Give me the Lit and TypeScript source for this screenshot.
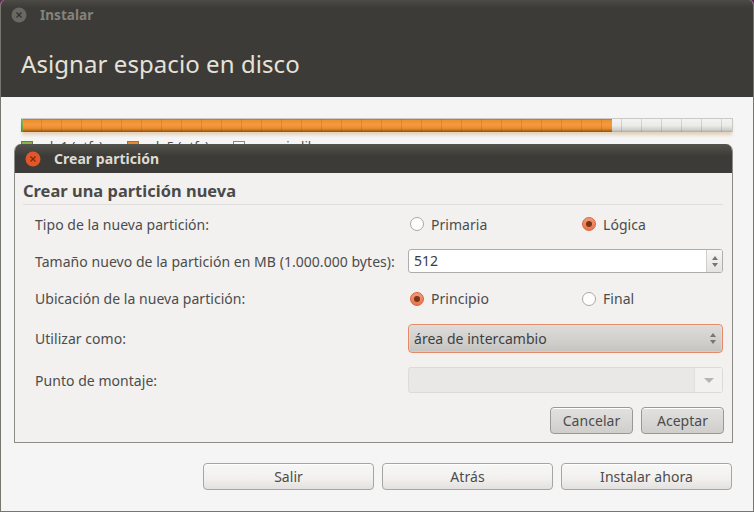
import { LitElement, css, html } from 'lit';
import { customElement } from 'lit/decorators.js';

const legend = [
  { name: 'sda1 (ntfs)', cls: 'green' },
  { name: 'sda5 (ntfs)', cls: 'orange' },
  { name: 'espacio libre', cls: 'free' },
];

@customElement('app-root')
export class AppRoot extends LitElement {
  static styles = css`
    :host {
      display: block;
      width: 754px;
      height: 512px;
      background: #5e2750;
      font-family: 'Noto Sans', sans-serif;
      font-size: 14px;
      letter-spacing: 0.04px;
      color: #4c4c4c;
    }

    * {
      box-sizing: border-box;
    }

    .window {
      position: relative;
      display: flex;
      flex-direction: column;
      height: 512px;
      border-radius: 5px 5px 0 0;
      border: 1px solid #77756f;
      border-top: none;
      background: #f5f5f5;
      overflow: hidden;
    }

    .header {
      height: 97px;
      flex: none;
      background: linear-gradient(#4c4a45 0, #3c3b37 8px);
      color: #e6e2da;
    }

    .titlebar {
      display: flex;
      align-items: center;
      gap: 13px;
      height: 30px;
      padding-left: 10px;
      font-size: 13.5px;
      font-weight: 700;
      color: #85837d;
    }

    .heading {
      margin: 16px 0 0 20px;
      font-size: 24px;
      line-height: 36px;
      font-weight: 400;
      letter-spacing: 0.07px;
    }

    .content {
      flex: 1;
      padding: 21px 20px 0;
    }

    .bar {
      display: flex;
      height: 14px;
      width: 712px;
      border: 1px solid #c9c9c6;
      border-width: 1px 1px 0 0;
      box-shadow: 0 4px 3px -1px rgba(190, 125, 50, 0.3);
      background: linear-gradient(#f3f3f2, #ebebea 50%, #cdcdcb 85%, #a9a9a7);
      position: relative;
    }

    .bar .seg-green {
      width: 2px;
      background: linear-gradient(#8cc152, #5f9a2c);
    }

    .bar .seg-orange {
      width: 589px;
      background: linear-gradient(#ee8e2e 0, #f59a3f 40%, #e58a2c 72%, #8f5310);
      border-top: 1px solid #d27c1f;
    }

    .ticks {
      position: absolute;
      inset: 0;
      background-image: linear-gradient(
        to right,
        transparent 19px,
        rgba(90, 60, 20, 0.17) 19px
      );
      background-size: 20px 100%;
      background-position: 1px 0;
    }

    .legend {
      display: flex;
      margin-top: 9px;
      font-size: 13px;
      line-height: 11px;
    }

    .legend span {
      display: flex;
      align-items: flex-start;
      gap: 6px;
      width: 106px;
    }

    .legend i {
      width: 12px;
      height: 12px;
      border: 1px solid #888;
    }

    .legend .green {
      background: #8ab34a;
      border-color: #5f8a2a;
    }

    .legend .orange {
      background: #e98a30;
      border-color: #b86a1f;
    }

    .legend .free {
      background: #f7f7f7;
    }

    .footer {
      display: flex;
      justify-content: flex-end;
      gap: 8px;
      padding: 0 21px 21px 0;
    }

    .footer button {
      width: 171px;
    }

    button {
      height: 27px;
      border: 1px solid #a6a5a1;
      border-radius: 4px;
      background: linear-gradient(#f7f7f6, #f2f1f0 55%, #e2e1df);
      color: #4c4c4c;
      font: inherit;
      letter-spacing: inherit;
      padding: 0;
      box-shadow: inset 0 1px 0 #fff;
    }

    .dialog {
      position: absolute;
      left: 13px;
      top: 144px;
      width: 719px;
      height: 299px;
      border: 1px solid #8d8c88;
      border-top: none;
      border-radius: 7px 7px 0 0;
      background: #f2f1f0;
      overflow: hidden;
    }

    .dialog-title {
      display: flex;
      align-items: center;
      gap: 13px;
      height: 29px;
      padding-left: 10px;
      background: linear-gradient(#55534e 0, #3c3b37 12px);
      color: #dfdbd2;
      font-size: 14px;
      font-weight: 700;
    }

    .dialog-body {
      padding: 0 9px 0 8px;
    }

    h2 {
      margin: 0;
      height: 32px;
      padding-top: 7px;
      border-bottom: 1px solid #dfdedc;
      font-size: 16.4px;
      line-height: 22px;
      font-weight: 700;
      color: #4a4a48;
    }

    .form {
      display: grid;
      grid-template-columns: 373px 315px;
      grid-template-rows: 22px 24px 23px 29px 26px;
      row-gap: 14px;
      margin-top: 8px;
      padding-left: 12px;
      align-items: center;
    }

    .radios {
      display: grid;
      grid-template-columns: 172px 143px;
      padding-left: 2px;
    }

    .radio {
      display: flex;
      align-items: center;
      gap: 7px;
    }

    .radio i {
      width: 14px;
      height: 14px;
      border-radius: 50%;
      border: 1px solid #a9a8a4;
      background: #fdfdfd;
      display: flex;
      align-items: center;
      justify-content: center;
    }

    .radio.on i {
      border-color: #d9623a;
      background: linear-gradient(#f09a78, #e8764c);
    }

    .radio.on i::after {
      content: '';
      width: 6px;
      height: 6px;
      border-radius: 50%;
      background: #7c3418;
    }

    .spin {
      display: flex;
      height: 24px;
      border: 1px solid #aeada9;
      border-radius: 3px;
      background: #fff;
      overflow: hidden;
    }

    .spin .value {
      flex: 1;
      padding-left: 5px;
      line-height: 22px;
      color: #3c3c3c;
    }

    .spin .arrows {
      display: flex;
      flex-direction: column;
      align-items: center;
      justify-content: center;
      gap: 3px;
      width: 16px;
      border-left: 1px solid #cfcecb;
      background: linear-gradient(#f6f6f5, #e4e3e1);
    }

    .combo {
      display: flex;
      align-items: center;
      justify-content: space-between;
      height: 29px;
      padding: 0 6px 0 5px;
      border: 1px solid #e58a68;
      border-radius: 4px;
      background: linear-gradient(#dddcda, #d0cfcc 60%, #c4c3c0);
      box-shadow: inset 0 0 0 1px rgba(255, 255, 255, 0.2);
      color: #3f3f3f;
    }

    .combo .arrows {
      display: flex;
      flex-direction: column;
      gap: 3px;
    }

    .entry {
      display: flex;
      justify-content: flex-end;
      height: 26px;
      border: 1px solid #dcdbd8;
      border-radius: 3px;
      background: #e9e8e6;
    }

    .entry .drop {
      display: flex;
      align-items: center;
      justify-content: center;
      width: 28px;
      border-left: 1px solid #e0dfdc;
      background: #f2f1f0;
    }

    .actions {
      display: flex;
      justify-content: flex-end;
      gap: 8px;
      margin-top: 14px;
      margin-right: -1px;
    }

    .actions button {
      width: 83px;
      background: linear-gradient(#e2e1df, #cfcecb);
      border-color: #999894;
    }

    .up,
    .down {
      width: 0;
      height: 0;
      border-left: 3.5px solid transparent;
      border-right: 3.5px solid transparent;
    }

    .up {
      border-bottom: 4px solid #77766f;
    }

    .down {
      border-top: 4px solid #77766f;
    }

    .drop .down {
      border-left-width: 5px;
      border-right-width: 5px;
      border-top: 5px solid #b5b4b0;
    }
  `;

  closeIcon(active: boolean) {
    const fill = active ? '#e2562a' : '#6a6863';
    const mark = active ? '#7a2a10' : '#33322f';
    return html`<svg width="16" height="16" viewBox="0 0 16 16">
      <circle cx="8" cy="8" r="7.5" fill=${fill} />
      <path d="M5.5 5.5l5 5M10.5 5.5l-5 5" stroke=${mark} stroke-width="1.3" fill="none" />
    </svg>`;
  }

  radio(label: string, on: boolean) {
    return html`<label class=${on ? 'radio on' : 'radio'}><i></i>${label}</label>`;
  }

  render() {
    return html`
      <div class="window">
        <div class="header">
          <div class="titlebar">${this.closeIcon(false)}<span>Instalar</span></div>
          <div class="heading">Asignar espacio en disco</div>
        </div>

        <div class="content">
          <div class="bar">
            <div class="seg-green"></div>
            <div class="seg-orange"></div>
            <div class="ticks"></div>
          </div>
          <div class="legend">
            ${legend.map((l) => html`<span><i class=${l.cls}></i>${l.name}</span>`)}
          </div>
        </div>

        <div class="footer">
          <button>Salir</button>
          <button>Atrás</button>
          <button>Instalar ahora</button>
        </div>

        <div class="dialog">
          <div class="dialog-title">${this.closeIcon(true)}<span>Crear partición</span></div>
          <div class="dialog-body">
            <h2>Crear una partición nueva</h2>
            <div class="form">
              <div>Tipo de la nueva partición:</div>
              <div class="radios">${this.radio('Primaria', false)}${this.radio('Lógica', true)}</div>

              <div>Tamaño nuevo de la partición en MB (1.000.000 bytes):</div>
              <div class="spin">
                <div class="value">512</div>
                <div class="arrows"><div class="up"></div><div class="down"></div></div>
              </div>

              <div>Ubicación de la nueva partición:</div>
              <div class="radios">${this.radio('Principio', true)}${this.radio('Final', false)}</div>

              <div>Utilizar como:</div>
              <div class="combo">
                <span>área de intercambio</span>
                <div class="arrows"><div class="up"></div><div class="down"></div></div>
              </div>

              <div>Punto de montaje:</div>
              <div class="entry"><div class="drop"><div class="down"></div></div></div>
            </div>
            <div class="actions">
              <button>Cancelar</button>
              <button>Aceptar</button>
            </div>
          </div>
        </div>
      </div>
    `;
  }
}
